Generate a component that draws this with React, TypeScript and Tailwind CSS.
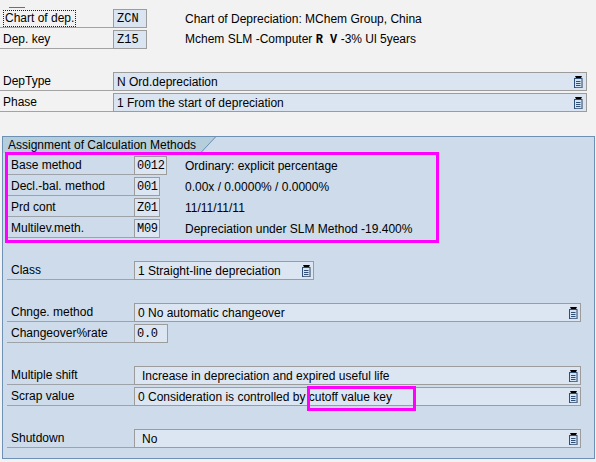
import React from "react";

function DropIcon() {
  return (
    <svg width="9" height="12" viewBox="0 0 9 12" className="shrink-0">
      <path d="M1 0h7L6.5 3h-4z" fill="#000" />
      <rect x="0.5" y="2.5" width="7.5" height="9" fill="#d3e4f5" stroke="#2f4f78" />
      <path d="M2 5.5h4.5M2 7.5h4.5M2 9.5h4.5" stroke="#2f4f78" />
      <path d="M8.5 3.5v8.5H1.5" stroke="#7f8fa0" fill="none" />
    </svg>
  );
}

type Field = {
  label: string;
  focus?: boolean;
  value?: string;
  mono?: boolean;
  w: number;
  drop?: boolean;
  indent?: boolean;
  desc?: React.ReactNode;
};

function TopRow({ f }: { f?: Field }) {
  if (!f) return <div className="h-[19px]" />;
  return (
    <div className="flex h-[19px]">
      <div className="w-[113px] shrink-0 border-b border-[#a3a3a3] flex items-center pl-[3px]">
        {f.focus ? (
          <span className="h-[17px] leading-[15px] px-[1px] border border-dotted border-[#1c1c3c]">{f.label}</span>
        ) : (
          <span>{f.label}</span>
        )}
      </div>
      <div
        style={{ width: f.w }}
        className={
          "shrink-0 border border-[#9c9c9c] bg-[#dbe5f1] flex items-center justify-between pl-[3px] pr-[3px] " +
          (f.mono ? "font-['Liberation_Mono',monospace] text-[12px]" : "")
        }
      >
        <span>{f.value}</span>
        {f.drop && <DropIcon />}
      </div>
      {f.desc && <div className="ml-[38px] flex items-center whitespace-nowrap">{f.desc}</div>}
    </div>
  );
}

function GroupRow({ f }: { f?: Field }) {
  if (!f) return <div className="h-[19px]" />;
  const pad = f.mono
    ? "pl-[2px] font-['Liberation_Mono',monospace] text-[12px] tracking-[-0.3px]"
    : f.indent
      ? "pl-[7px]"
      : "pl-[3px]";
  return (
    <div className="flex h-[19px]">
      <div className="w-[127px] shrink-0 border-b border-[#9ea3a9] flex items-center pl-[4px]">{f.label}</div>
      <div className={f.desc ? "w-[51px] shrink-0 flex" : "flex"}>
        <div
          style={{ width: f.w }}
          className={
            "shrink-0 border border-[#9c9c9c] bg-[#dce6f2] flex items-center justify-between pr-[2px] " + pad
          }
        >
          <span className="whitespace-nowrap">{f.value}</span>
          {f.drop && <DropIcon />}
        </div>
      </div>
      {f.desc && <div className="flex items-center whitespace-nowrap">{f.desc}</div>}
    </div>
  );
}

const topRows: (Field | undefined)[] = [
  {
    label: "Chart of dep.",
    focus: true,
    value: "ZCN",
    mono: true,
    w: 34,
    desc: "Chart of Depreciation: MChem Group, China",
  },
  {
    label: "Dep. key",
    value: "Z15",
    mono: true,
    w: 34,
    desc: (
      <span>
        Mchem SLM -Computer{" "}
        <span className="font-['Liberation_Mono',monospace] font-bold text-[12px]">R V</span> -3% Ul 5years
      </span>
    ),
  },
  undefined,
  { label: "DepType", value: "N Ord.depreciation", w: 474, drop: true },
  { label: "Phase", value: "1 From the start of depreciation", w: 474, drop: true },
];

const groupRows: (Field | undefined)[] = [
  { label: "Base method", value: "0012", mono: true, w: 33, desc: "Ordinary: explicit percentage" },
  { label: "Decl.-bal. method", value: "001", mono: true, w: 26, desc: "0.00x / 0.0000% / 0.0000%" },
  { label: "Prd cont", value: "Z01", mono: true, w: 26, desc: "11/11/11/11" },
  { label: "Multilev.meth.", value: "M09", mono: true, w: 26, desc: "Depreciation under SLM Method -19.400%" },
  undefined,
  { label: "Class", value: "1 Straight-line depreciation", w: 180, drop: true },
  undefined,
  { label: "Chnge. method", value: "0 No automatic changeover", w: 447, drop: true },
  { label: "Changeover%rate", value: "0.0", mono: true, w: 34 },
  undefined,
  { label: "Multiple shift", value: "Increase in depreciation and expired useful life", w: 447, drop: true, indent: true },
  { label: "Scrap value", value: "0 Consideration is controlled by cutoff value key", w: 447, drop: true },
  undefined,
  { label: "Shutdown", value: "No", w: 447, drop: true, indent: true },
];

export default function App() {
  return (
    <div className="relative w-[596px] h-[462px] overflow-hidden bg-[#f2f2f2] text-black text-[12px] font-['Liberation_Sans',Arial,sans-serif]">
      {/* required-field marker above the focused label */}
      <div className="absolute left-[9px] top-[7px] w-[16px] h-[1px] bg-[#f03a2a]" />

      <div className="flex flex-col gap-[2px] pt-[9px]">
        {topRows.map((f, i) => (
          <TopRow key={i} f={f} />
        ))}
      </div>

      <div className="relative ml-[2px] mt-[24px] w-[593px] border border-[#6e90b4] bg-[#cddbea] pb-[10px]">
        <div className="relative h-[16px] w-[213px]">
          <div className="absolute inset-0 bg-[#b5cedc] [clip-path:polygon(0_0,100%_0,calc(100%-15px)_100%,0_100%)]" />
          <svg className="absolute right-0 top-0" width="16" height="16" viewBox="0 0 16 16">
            <path d="M15.5 0L0.5 16" stroke="#6e90b4" strokeWidth="1" />
          </svg>
          <div className="relative pl-[5px] leading-[16px] whitespace-nowrap">Assignment of Calculation Methods</div>
        </div>

        <div className="flex flex-col gap-[2px] pt-[3px] pl-[4px]">
          {groupRows.map((f, i) => (
            <GroupRow key={i} f={f} />
          ))}
        </div>

        {/* highlight frames */}
        <div className="absolute left-[2px] top-[15px] w-[434px] h-[91px] border-[3px] border-[#ff00ff]" />
        <div className="absolute left-[304px] top-[249px] w-[109px] h-[25px] border-[3px] border-[#ff00ff]" />
      </div>
    </div>
  );
}
